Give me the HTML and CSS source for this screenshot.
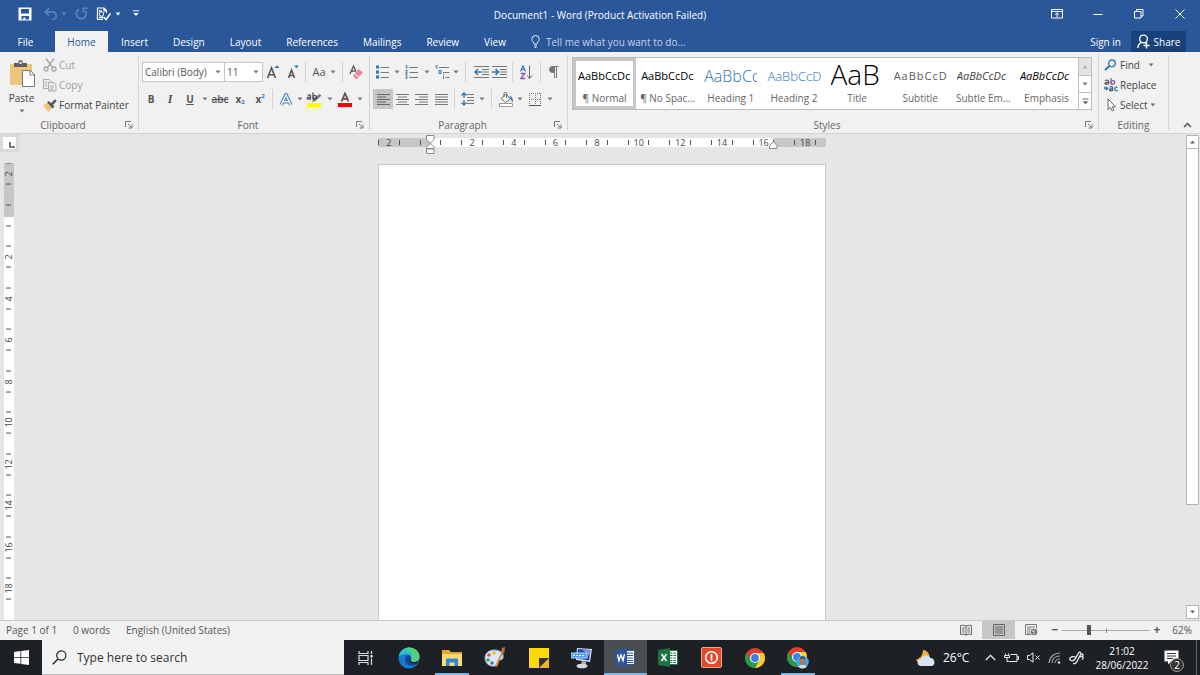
FILE: index.html
```html
<!DOCTYPE html>
<html lang="en">
<head>
<meta charset="utf-8">
<title>Document1 - Word</title>
<link rel="stylesheet" href="styles.css">
</head>
<body>
<svg class="defs" aria-hidden="true">
  <symbol id="caret" viewBox="0 0 6 4"><path d="M0.5 0.5h5L3 3.5z" fill="currentColor"/></symbol>
  <symbol id="launch" viewBox="0 0 8 8"><path d="M.5 6V.5H6M3 3l3.5 3.5M7 3.5V7H3.5" fill="none" stroke="#777"/></symbol>
</svg>

<header class="titlebar">
  <div class="qat">
    <button aria-label="Save"><svg width="14" height="14" viewBox="0 0 14 14"><path fill="#fff" fill-rule="evenodd" d="M.5.5h13v13H.5zM3 2v4.5h8V2zM3.500 9v3.500h1.800V10.500h2v2H11V9z"/></svg></button>
    <button class="dim" aria-label="Undo"><svg width="14" height="12" viewBox="0 0 14 12"><path d="M1 4h7.500a3.700 3.700 0 0 1 0 7.400M5 .5L1.200 4 5 7.500" fill="none" stroke="currentColor" stroke-width="1.600"/></svg></button>
    <button class="dim" aria-label="Undo options"><svg width="6" height="4"><use href="#caret"/></svg></button>
    <button class="dim" aria-label="Redo"><svg width="13" height="13" viewBox="0 0 13 13"><path d="M4.200 2.200A5 5 0 1 0 10.200 3.600M7.500 1.200h5M8.200 1.200v4.300" fill="none" stroke="currentColor" stroke-width="1.600"/></svg></button>
    <button aria-label="Spelling"><svg width="15" height="14" viewBox="0 0 15 14"><path d="M7 12.500H1.500V1H8l2.500 2.500V6M8 1v3h2.500" fill="none" stroke="#fff" stroke-width="1.200"/><circle cx="5.500" cy="7" r="2.200" fill="none" stroke="#fff"/><path d="M3 4h3M3 10.500h4M7.500 10l2.500 2.500 4.500-6" fill="none" stroke="#fff" stroke-width="1.500"/></svg></button>
    <button aria-label="Spelling options"><svg width="6" height="4"><use href="#caret"/></svg></button>
    <button aria-label="Customize toolbar"><svg width="6" height="7" viewBox="0 0 6 7"><path d="M0 .8h6" stroke="#fff"/><path d="M.3 3h5.400L3 6z" fill="#fff"/></svg></button>
  </div>
  <h1 class="doc-title">Document1 - Word (Product Activation Failed)</h1>
  <div class="window-controls">
    <button aria-label="Ribbon display options"><svg width="12" height="10" viewBox="0 0 12 10"><path d="M.5.5h11v8.500H.5zM.5 2.500h11M6 8V4M4 5.800L6 3.800l2 2" fill="none" stroke="#fff"/></svg></button>
    <button aria-label="Minimize"><svg width="10" height="10" viewBox="0 0 10 10"><path d="M.5 5.500h9" stroke="#fff"/></svg></button>
    <button aria-label="Restore"><svg width="10" height="10" viewBox="0 0 10 10"><path d="M.5 2.500h6.500v6.500H.5zM2.500 2.500v-2H9v6.500H7" fill="none" stroke="#fff"/></svg></button>
    <button aria-label="Close"><svg width="10" height="10" viewBox="0 0 10 10"><path d="M.5.5l9 9M9.500.5l-9 9" stroke="#fff"/></svg></button>
  </div>
</header>

<nav class="tabs">
  <button class="tab file">File</button>
  <button class="tab active">Home</button>
  <button class="tab">Insert</button>
  <button class="tab">Design</button>
  <button class="tab">Layout</button>
  <button class="tab">References</button>
  <button class="tab">Mailings</button>
  <button class="tab">Review</button>
  <button class="tab">View</button>
  <button class="tab tell"><svg width="9" height="13" viewBox="0 0 9 13"><path d="M3 9C3 7 .8 6.500.8 4.200a3.700 3.700 0 0 1 7.400 0C8.200 6.500 6 7 6 9zM3 10.800h3M3.500 12.500h2" fill="none" stroke="#e3ebf6"/></svg>Tell me what you want to do...</button>
  <button class="sign-in">Sign in</button>
  <button class="share"><svg width="13" height="15" viewBox="0 0 13 15"><circle cx="6.500" cy="5" r="3.900" fill="none" stroke="#fff" stroke-width="1.400"/><path d="M.8 14c.3-3 1.700-4.800 3.700-5.600M8 8.500l1.500 1.500M9.500 8.500v6M6.500 11.500h6" fill="none" stroke="#fff" stroke-width="1.400"/></svg>Share</button>
</nav>

<main class="ribbon">
  <section class="group clipboard">
    <div class="clip-body">
      <button class="paste"><svg width="26" height="27" viewBox="0 0 26 27"><path d="M1 4h22v21H1z" fill="#edc57d"/><path d="M5 3h4.500V.5h4V3H18v4H5z" fill="#606060"/><path d="M10.500 2h2v2h-2z" fill="#eee"/><path d="M13.500 10.500h8l4 4V26.500h-12z" fill="#fff" stroke="#777"/><path d="M21 10.500v4.500h4.500" fill="none" stroke="#777"/></svg><span>Paste</span><svg width="6" height="4"><use href="#caret"/></svg></button>
      <div class="clip-list">
        <button class="off"><svg width="14" height="14" viewBox="0 0 14 14"><g fill="none" stroke="#a5a5a5" stroke-width="1.300"><path d="M3 .5l6.500 9M11 .5l-6.500 9"/><circle cx="3" cy="11" r="2"/><circle cx="11" cy="11" r="2"/></g></svg>Cut</button>
        <button class="off"><svg width="14" height="14" viewBox="0 0 14 14"><g fill="#f0f0f0" stroke="#a9a9a9"><path d="M.5 1.500H6l2 2v7H.5z"/><path d="M5.500 4.500h5l2.500 2.500v6h-7.500z"/><path d="M2 4h2M2 6h2M2 8h2M7 8h4M7 10h4M7 12h3"/></g></svg>Copy</button>
        <button><svg width="14" height="13" viewBox="0 0 14 13"><path d="M0 6l4-2 5 5-3.500 4C3.500 11 2 9 0 6z" fill="#edc57d"/><path d="M4 3.500L6 2l2 2L12 .3l1.800 1.800L10 6l1.500 1.500L9.500 9.500z" fill="#5a5a5a"/></svg>Format Painter</button>
      </div>
    </div>
    <footer><span>Clipboard</span><button class="launcher" aria-label="Clipboard settings"><svg width="8" height="8"><use href="#launch"/></svg></button></footer>
  </section>

  <section class="group font">
    <div class="bar font-top">
      <button class="combo"><span>Calibri (Body)</span><svg width="6" height="4"><use href="#caret"/></svg></button>
      <button class="combo size"><span>11</span><svg width="6" height="4"><use href="#caret"/></svg></button>
      <button aria-label="Grow font"><svg width="14" height="14" viewBox="0 0 14 14"><path d="M1.500 13L5.500 3l4 10M3 9.800h5" fill="none" stroke="#555" stroke-width="1.600"/><path d="M8.500 3L11 .3 13.500 3z" fill="#2e75b6"/></svg></button>
      <button aria-label="Shrink font"><svg width="12" height="14" viewBox="0 0 12 14"><path d="M1.500 13L4.500 5l3 8M2.500 10.500h4" fill="none" stroke="#555" stroke-width="1.600"/><path d="M7 .5h5L9.500 3.200z" fill="#2e75b6"/></svg></button>
      <i class="sep"></i>
      <button class="case">Aa<svg width="6" height="4"><use href="#caret"/></svg></button>
      <i class="sep"></i>
      <button aria-label="Clear formatting"><svg width="14" height="15" viewBox="0 0 14 15"><path d="M1 9L4.500 1 7 6.500M2.500 6h4" fill="none" stroke="#555" stroke-width="1.300"/><path d="M4 10.500L9.500 4 14 7.500 8 14H6.500z" fill="#e8899b"/><path d="M5.500 8.800l4.300 3.500" stroke="#f3f3f3"/></svg></button>
    </div>
    <div class="bar font-bottom">
      <button class="b">B</button>
      <button class="i">I</button>
      <button class="u">U</button>
      <button aria-label="Underline options"><svg width="6" height="4"><use href="#caret"/></svg></button>
      <button class="strike">abc</button>
      <button class="script">x<sub>2</sub></button>
      <button class="script">x<sup>2</sup></button>
      <i class="sep"></i>
      <button aria-label="Text effects"><svg width="14" height="13" viewBox="0 0 14 13"><path d="M2.200 12L7 1.500 11.800 12M4 8.700h6" fill="none" stroke="#5b90cc" stroke-width="3.600"/><path d="M2.200 12L7 1.800 11.800 12M4 8.700h6" fill="none" stroke="#fff" stroke-width="1.200"/></svg></button>
      <button aria-label="Text effects options"><svg width="6" height="4"><use href="#caret"/></svg></button>
      <button aria-label="Highlight"><svg width="16" height="15" viewBox="0 0 16 15"><path d="M1 11h14v4H1z" fill="#ff0"/><path d="M6 10l1-3 6.500-5L15.500 3.500 9.500 9z" fill="#777"/><path d="M1.500 3.300q3-1.200 3 .8v3.400M4.500 5q-3.300 0-3.300 1.300t3.300.6M7 .5v7" fill="none" stroke="#444" stroke-width="1.200"/><circle cx="8.800" cy="5.200" r="1.700" fill="none" stroke="#444" stroke-width="1.200"/></svg></button>
      <button aria-label="Highlight options"><svg width="6" height="4"><use href="#caret"/></svg></button>
      <button aria-label="Font color"><svg width="14" height="15" viewBox="0 0 14 15"><path d="M0 11h14v4H0z" fill="#f00"/><path d="M3.500 9.500L7 1.500l3.500 8M4.800 6.800h4.400" fill="none" stroke="#555" stroke-width="1.800"/></svg></button>
      <button aria-label="Font color options"><svg width="6" height="4"><use href="#caret"/></svg></button>
    </div>
    <footer><span>Font</span><button class="launcher" aria-label="Font settings"><svg width="8" height="8"><use href="#launch"/></svg></button></footer>
  </section>

  <section class="group paragraph">
    <div class="bar para-top">
      <button aria-label="Bullets"><svg width="14" height="14" viewBox="0 0 14 14"><path d="M0 .5h3v3H0zM0 5.500h3v3H0zM0 10.500h3v3H0z" fill="#2e75b6"/><path d="M4.500 2.500H13M4.500 7.500H13M4.500 12.500H13" stroke="#777"/></svg></button>
      <button aria-label="Bullet options"><svg width="6" height="4"><use href="#caret"/></svg></button>
      <button aria-label="Numbering"><svg width="14" height="14" viewBox="0 0 14 14"><path d="M.5 1.200L1.800.5v3.500M.3 5.500h2L.8 8.300h2M.3 10h2L1.500 11.500 2.300 13H.2" fill="none" stroke="#2e75b6"/><path d="M4.500 2.500H13M4.500 7.500H13M4.500 12.500H13" stroke="#777"/></svg></button>
      <button aria-label="Numbering options"><svg width="6" height="4"><use href="#caret"/></svg></button>
      <button aria-label="Multilevel list"><svg width="15" height="14" viewBox="0 0 15 14"><path d="M.5 1.200L1.800.5v3.500M4 5.500h2v3H4zM8.500 11v3M8.500 9v1" fill="none" stroke="#2e75b6"/><path d="M4 2.500h10M8 7.500h6.500M10.500 12.500h4" stroke="#777"/></svg></button>
      <button aria-label="Multilevel options"><svg width="6" height="4"><use href="#caret"/></svg></button>
      <i class="sep"></i>
      <button aria-label="Decrease indent"><svg width="15" height="12" viewBox="0 0 15 12"><path d="M0 .5h15M8 3.500h7M8 6h7M8 8.500h7M0 11.500h15" stroke="#777"/><path d="M7.500 6H1.500M4 3L1 6l3 3" fill="none" stroke="#2e75b6" stroke-width="1.500"/></svg></button>
      <button aria-label="Increase indent"><svg width="15" height="12" viewBox="0 0 15 12"><path d="M0 .5h15M8 3.500h7M8 6h7M8 8.500h7M0 11.500h15" stroke="#777"/><path d="M0 6h6M3.500 3l3 3-3 3" fill="none" stroke="#2e75b6" stroke-width="1.500"/></svg></button>
      <i class="sep"></i>
      <button aria-label="Sort"><svg width="13" height="15" viewBox="0 0 13 15"><path d="M.5 6.500L3 .8l2.500 5.700M1.500 4.500h3" fill="none" stroke="#2e75b6" stroke-width="1.200"/><path d="M.8 8.500h4L.8 13.500h4.500" fill="none" stroke="#8e55b0" stroke-width="1.300"/><path d="M9.500.5v13M7 10.500l2.500 3 2.500-3" fill="none" stroke="#666"/></svg></button>
      <i class="sep"></i>
      <button aria-label="Show paragraph marks"><svg width="10" height="12" viewBox="0 0 10 12"><path d="M5 .5H3.500a3 3 0 0 0 0 6H5zM5 .5h4.500M5.500 0v12M7.500.5V12" fill="#777" stroke="#777"/></svg></button>
    </div>
    <div class="bar para-bottom">
      <button class="selected" aria-label="Align left"><svg width="13" height="11" viewBox="0 0 13 11"><path d="M0 .5h13M0 3h9M0 5.500h13M0 8h9M0 10.500h13" stroke="#666"/></svg></button>
      <button aria-label="Center"><svg width="13" height="11" viewBox="0 0 13 11"><path d="M0 .5h13M2 3h9M0 5.500h13M2 8h9M0 10.500h13" stroke="#777"/></svg></button>
      <button aria-label="Align right"><svg width="13" height="11" viewBox="0 0 13 11"><path d="M0 .5h13M4 3h9M0 5.500h13M4 8h9M0 10.500h13" stroke="#777"/></svg></button>
      <button aria-label="Justify"><svg width="13" height="11" viewBox="0 0 13 11"><path d="M0 .5h13M0 3h13M0 5.500h13M0 8h13M0 10.500h13" stroke="#777"/></svg></button>
      <i class="sep"></i>
      <button aria-label="Line spacing"><svg width="14" height="14" viewBox="0 0 14 14"><path d="M3 1v5M3 8v5M.5 3.500L3 1l2.500 2.500M.5 10.500L3 13l2.500-2.500" fill="none" stroke="#2e75b6" stroke-width="1.300"/><path d="M6 2.500h7M6 5.500h7M6 8.500h7M6 11.500h7" stroke="#777"/></svg></button>
      <button aria-label="Spacing options"><svg width="6" height="4"><use href="#caret"/></svg></button>
      <i class="sep"></i>
      <button aria-label="Shading"><svg width="15" height="15" viewBox="0 0 15 15"><path d="M2 6.500L7 2l4.500 5-5 3.500zM5 5V1.500a1.300 1.300 0 0 1 2.600 0V6" fill="#fff" stroke="#666"/><path d="M10.500 4c3 .5 3.500 3 3.500 6-1.500-.5-2-2.500-2.500-4z" fill="#2e75b6"/><path d="M.5 11.500h13v3H.5z" fill="#fff" stroke="#999"/></svg></button>
      <button aria-label="Shading options"><svg width="6" height="4"><use href="#caret"/></svg></button>
      <button aria-label="Borders"><svg width="13" height="13" viewBox="0 0 13 13"><path d="M0 .5h12M0 6.500h12M.5 0v12M6.500 0v12M11.500 0v12" fill="none" stroke="#777" stroke-dasharray="1 1"/><path d="M0 12.500h12" stroke="#555"/></svg></button>
      <button aria-label="Border options"><svg width="6" height="4"><use href="#caret"/></svg></button>
    </div>
    <footer><span>Paragraph</span><button class="launcher" aria-label="Paragraph settings"><svg width="8" height="8"><use href="#launch"/></svg></button></footer>
  </section>

  <section class="group styles">
    <div class="gallery">
      <button class="style chosen"><span class="sample">AaBbCcDc</span><span>¶ Normal</span></button>
      <button class="style"><span class="sample">AaBbCcDc</span><span>¶ No Spac...</span></button>
      <button class="style"><span class="sample h1">AaBbCc</span><span>Heading 1</span></button>
      <button class="style"><span class="sample h2">AaBbCcD</span><span>Heading 2</span></button>
      <button class="style"><span class="sample title">AaB</span><span>Title</span></button>
      <button class="style"><span class="sample subtitle">AaBbCcD</span><span>Subtitle</span></button>
      <button class="style"><span class="sample subtle">AaBbCcDc</span><span>Subtle Em...</span></button>
      <button class="style"><span class="sample emph">AaBbCcDc</span><span>Emphasis</span></button>
      <div class="gallery-nav">
        <button class="nav-off" aria-label="Previous styles"><svg width="6" height="4" viewBox="0 0 6 4"><path d="M.5 3.500h5L3 .5z" fill="#aaa"/></svg></button>
        <button aria-label="Next styles"><svg width="6" height="4"><use href="#caret"/></svg></button>
        <button aria-label="More styles"><svg width="7" height="7" viewBox="0 0 7 7"><path d="M.5 1h6" stroke="#666"/><path d="M.8 3.300h5.400L3.500 6.500z" fill="#666"/></svg></button>
      </div>
    </div>
    <footer><span>Styles</span><button class="launcher" aria-label="Style settings"><svg width="8" height="8"><use href="#launch"/></svg></button></footer>
  </section>

  <section class="group editing">
    <div class="edit-list">
      <button><svg width="14" height="12" viewBox="0 0 14 12"><circle cx="8" cy="4.300" r="3.300" fill="#fff" stroke="#2e75b6" stroke-width="1.400"/><path d="M5.500 7L1 11" stroke="#2e75b6" stroke-width="2"/></svg><span class="find">Find</span><svg width="6" height="4"><use href="#caret"/></svg></button>
      <button><svg width="14" height="14" viewBox="0 0 14 14"><g fill="none" stroke-width="1.300"><path d="M1 2.500q3.500-1 3.500 1v3M4.500 4.200q-3.500 0-3.500 1.200t3.500.5" stroke="#555"/><path d="M7 0v6.500" stroke="#8e55b0"/><circle cx="9" cy="4.500" r="1.800" stroke="#8e55b0"/><path d="M5.500 9q3-1 3 .8v3.200M8.500 10.700q-3 0-3 1.200t3 .4" stroke="#555"/><path d="M13.500 9.500a1.700 1.700 0 1 0 0 2.800M.8 8.500v2H3.500M2.200 9l1.500 1.500L2.200 12" stroke="#2e75b6"/></g></svg><span>Replace</span></button>
      <button><svg width="14" height="14" viewBox="0 0 14 14"><path d="M4 1v10.500l2.500-2.200L8.300 13l1.500-.8L8.300 8.800h3.200z" fill="#fff" stroke="#666"/></svg><span>Select</span><svg width="6" height="4"><use href="#caret"/></svg></button>
    </div>
    <footer class="plain"><span>Editing</span></footer>
  </section>
  <button class="collapse" aria-label="Collapse ribbon"><svg width="9" height="6" viewBox="0 0 9 6"><path d="M1 5l3.500-3.500L8 5" fill="none" stroke="#555" stroke-width="1.500"/></svg></button>
</main>

<div class="workspace">
  <div class="left-rail">
    <button class="tab-stop" aria-label="Tab stop"><svg width="6" height="6" viewBox="0 0 6 6"><path d="M1 0v5h5" fill="none" stroke="#555" stroke-width="1.600"/></svg></button>
    <div class="v-ruler">
      <div class="v-cells">
        <span>2</span><span></span><span>2</span><span>4</span><span>6</span><span>8</span><span>10</span><span>12</span><span>14</span><span>16</span><span>18</span>
      </div>
    </div>
  </div>
  <div class="canvas">
    <div class="h-ruler">
      <div class="h-cells">
        <span>2</span><span></span><span>2</span><span>4</span><span>6</span><span>8</span><span>10</span><span>12</span><span>14</span><span>16</span><span>18</span>
      </div>
      <svg class="indent-left" width="9" height="20" viewBox="0 0 9 20"><path d="M.5.5h7.500v4l-3.700 4-3.800-4zM.5 13.500v-1.500l3.800-3.500 3.700 3.500v1.500zM.5 14h7.500v4.500H.5z" fill="#fff" stroke="#888"/></svg>
      <svg class="indent-right" width="9" height="8" viewBox="0 0 9 8"><path d="M.5 7.500v-3l3.800-3.800 3.700 3.800v3z" fill="#fff" stroke="#888"/></svg>
    </div>
    <article class="page" contenteditable="true" aria-label="Document page"></article>
  </div>
  <div class="scrollbar">
    <button aria-label="Scroll up"><svg width="7" height="4" viewBox="0 0 6 4"><path d="M.5 3.500h5L3 .5z" fill="#666"/></svg></button>
    <div class="track"><div class="thumb"></div></div>
    <button aria-label="Scroll down"><svg width="7" height="4" viewBox="0 0 6 4"><path d="M.5.5h5L3 3.500z" fill="#666"/></svg></button>
  </div>
</div>

<div class="status">
  <span class="s-page">Page 1 of 1</span><span class="s-words">0 words</span><span>English (United States)</span>
  <div class="views">
    <button aria-label="Read mode"><svg width="12" height="12" viewBox="0 0 12 12"><path d="M.5 1.500q3-.8 5.500.5 2.500-1.300 5.500-.5v9q-3-.8-5.500.5-2.500-1.300-5.500-.5zM6 2v9M2 4h2.500M2 6h2.500M2 8h2.500M7.500 4H10M7.500 6H10M7.500 8H10" fill="none" stroke="#666"/></svg></button>
    <button class="selected" aria-label="Print layout"><svg width="12" height="12" viewBox="0 0 12 12"><path d="M.5.5h11v11H.5zM2 3h8M2 5h8M2 7h8M2 9h8" fill="none" stroke="#666"/></svg></button>
    <button aria-label="Web layout"><svg width="13" height="12" viewBox="0 0 13 12"><path d="M6 10.500H.5V.5h11v4M2 3h8M2 5h4M2 7h3M2 9h3" fill="none" stroke="#777"/><circle cx="9" cy="8" r="3.300" fill="#777"/><path d="M7 7l2 .5 1-1.500M8 10l2-1" fill="none" stroke="#fff" stroke-width=".8"/></svg></button>
  </div>
  <div class="zoom">
    <button aria-label="Zoom out">−</button>
    <input type="range" min="0" max="100" value="30" aria-label="Zoom">
    <button aria-label="Zoom in">+</button>
    <span class="pct">62%</span>
  </div>
</div>

<div class="taskbar">
  <button class="start" aria-label="Start"><svg width="15" height="15" viewBox="0 0 15 15"><path d="M0 2l6.500-1v6H0zM7.300.9L15 0v7H7.300zM0 7.800h6.500v6L0 13zM7.300 7.800H15V15l-7.700-1z" fill="#fff"/></svg></button>
  <label class="search"><svg width="15" height="15" viewBox="0 0 15 15"><circle cx="9.300" cy="5.500" r="4.600" fill="none" stroke="#222" stroke-width="1.200"/><path d="M6 9L.7 14.300" stroke="#222" stroke-width="1.300"/></svg><input type="text" placeholder="Type here to search" aria-label="Type here to search"></label>
  <div class="apps">
    <button aria-label="Task view"><svg width="16" height="14" viewBox="0 0 16 14"><path d="M1 0v2.500h9V0M1 14v-2.500h9V14M1 4.500h9v5H1zM13.500 0v3M13.500 7.500V14" fill="none" stroke="#ddd" stroke-width="1.200"/><path d="M12.500 4h2v2.500h-2z" fill="#fff"/></svg></button>
    <button aria-label="Edge"><svg width="22" height="22" viewBox="0 0 22 22"><circle cx="11" cy="11" r="10.500" fill="#167bd0"/><path d="M.7 10C1.500 4 6 .5 11 .5c6 0 10.500 4.500 10.500 9 0 4-3 5.500-6.500 5.500-2 0-3-1-2-2.500C14 10 12.500 7 9 7c-4 0-7 1-8.300 3z" fill="#36c2c0"/><path d="M11 .5c6 0 10.500 4.500 10.500 9 0 4-3 5.500-6.500 5.500-2 0-3-1-2-2.500C16 10 14 4 7 1.300z" fill="#55d07a"/><path d="M7 13c-.8-4 3-6 6-3-1 2-1 5 3 5.500 2 0 3.500-.5 4.500-1.500-2 5-7 5.500-9 4.500C9 18 7.500 16 7 13z" fill="#0d4a9c"/><path d="M12.800 11.200c-.8 1.700-.5 3.400 2 3.900 2 .3 4-.2 5.700-1.500-.5 1.500-1 2-1.500 2.700-3 .8-8-.3-7.700-3.300 0-1 .8-1.800 1.500-1.800z" fill="#172027"/></svg></button>
    <button class="running" aria-label="File Explorer"><svg width="20" height="17" viewBox="0 0 20 17"><path d="M0 1h7l2 2h11v14H0z" fill="#e5a72f"/><path d="M0 5h20v12H0z" fill="#ffda72"/><path d="M4 17V9.500h12V17h-3.500v-3.500h-5V17z" fill="#2e8bdc"/></svg></button>
    <button aria-label="Paint"><svg width="22" height="21" viewBox="0 0 22 21"><path d="M10 3c6 0 10 3 9 8-1 3-4 1-5 3s1 4-3 5c-6 1-10-3-10-8s4-8 9-8z" fill="#d9e9f5" stroke="#91b4cf"/><circle cx="5" cy="8" r="1.800" fill="#e94b36"/><circle cx="10" cy="6" r="1.800" fill="#f3bb22"/><circle cx="4" cy="13" r="1.800" fill="#45a649"/><circle cx="8" cy="16" r="1.800" fill="#377cc7"/><path d="M11 19L18 4l1.500.8L13 20z" fill="#e08a38"/><path d="M17 5l1-4 3-1-.5 5-1.500 1.500z" fill="#b5713c"/></svg></button>
    <button aria-label="Sticky Notes"><svg width="20" height="20" viewBox="0 0 20 20"><path d="M0 0h20v20H0z" fill="#ffd80b"/><path d="M10 10h10v10H10z" fill="#343434"/><path d="M20 10L10 20h10z" fill="#f2b31c"/></svg></button>
    <button aria-label="Remote desktop"><svg width="22" height="22" viewBox="0 0 22 22"><path d="M6 1l15 1-2 13-14-2z" fill="#dce0eb"/><path d="M7 2l12.500 1-1.500 10.500L6 11.500z" fill="#263fc0"/><path d="M11 2.500l8.500.5-1 6z" fill="#7e91e6"/><path d="M0 6h16v5H0z" fill="#4da1e5" stroke="#b9ddfa"/><path d="M2 8.500h12" stroke="#dff" stroke-dasharray="2 1"/><path d="M11 14l4 .5v3h-5z" fill="#aaa"/><ellipse cx="11" cy="19" rx="5.500" ry="2.300" fill="#dadada"/></svg></button>
    <button class="running current" aria-label="Word"><svg width="20" height="19" viewBox="0 0 20 19"><path d="M9 2.500h10.500v14H9z" fill="#fff" stroke="#2b579a"/><path d="M12 5h6M12 7.500h6M12 10h6M12 12.500h6M12 14.500h6" stroke="#2b579a"/><path d="M0 2l12-2v19L0 17z" fill="#2b579a"/><path d="M2.500 6.500l1.500 6L6 7l2 5.500 1.500-6.300" fill="none" stroke="#fff" stroke-width="1.400"/></svg></button>
    <button aria-label="Excel"><svg width="20" height="19" viewBox="0 0 20 19"><path d="M9 2.500h10.500v14H9z" fill="#fff" stroke="#207245"/><path d="M12 5h2.500M12 7.500h2.500M12 10h2.500M12 12.500h2.500M12 14.500h2.500M15.500 5H18M15.500 7.500H18M15.500 10H18M15.500 12.500H18M15.500 14.500H18" stroke="#207245"/><path d="M0 2l12-2v19L0 17z" fill="#207245"/><path d="M3.500 6l5 7M8.500 6l-5 7" fill="none" stroke="#fff" stroke-width="1.600"/></svg></button>
    <button aria-label="Power tool"><svg width="21" height="21" viewBox="0 0 21 21"><rect x=".5" y=".5" width="20" height="20" rx="1.500" fill="#e04a2c" stroke="#f3a492"/><circle cx="10.500" cy="10.500" r="5.800" fill="none" stroke="#fff" stroke-width="1.500"/><path d="M10.500 7v7" stroke="#fff" stroke-width="1.700"/></svg></button>
    <button aria-label="Chrome"><svg width="20" height="20" viewBox="0 0 20 20"><circle cx="10" cy="10" r="10" fill="#e33b2e"/><path d="M1.340 5A10 10 0 0 0 10 20l4.300-7.500H5.700z" fill="#269b4a"/><path d="M10 20a10 10 0 0 0 8.660-15H10l4.300 7.500z" fill="#fdcb2e"/><circle cx="10" cy="10" r="5" fill="#fff"/><circle cx="10" cy="10" r="3.900" fill="#3d7ee8"/></svg></button>
    <button class="running" aria-label="Chrome profile"><svg width="22" height="22" viewBox="0 0 22 22"><circle cx="10" cy="10" r="10" fill="#e33b2e"/><path d="M1.340 5A10 10 0 0 0 10 20l4.300-7.500H5.700z" fill="#269b4a"/><path d="M10 20a10 10 0 0 0 8.660-15H10l4.300 7.500z" fill="#fdcb2e"/><circle cx="10" cy="10" r="5" fill="#fff"/><circle cx="10" cy="10" r="3.900" fill="#3d7ee8"/><circle cx="15.500" cy="15" r="6.300" fill="#4aa4dc"/><path d="M11.500 20c1-3 7-3 8 0a6 6 0 0 1-8 0z" fill="#ddd"/><ellipse cx="15.500" cy="14" rx="2.800" ry="3.800" fill="#a97661"/><path d="M12.700 13c0-5 5.600-5 5.600 0-1-2-4.600-2-5.600 0z" fill="#4d4544"/></svg></button>
  </div>
  <div class="tray">
    <svg width="20" height="18" viewBox="0 0 20 18"><path d="M7 1a7 7 0 1 1-7 9.500C4 10 7 6 7 1z" fill="#fbb034"/><path d="M5 17a3.500 3.500 0 0 1 .3-7A5 5 0 0 1 14.500 9 4.200 4.200 0 0 1 16 17z" fill="#d5e4f8"/></svg>
    <span class="temp">26°C</span>
    <div class="tray-icons">
      <svg width="11" height="7" viewBox="0 0 11 7"><path d="M.8 6l4.700-4.700L10.200 6" fill="none" stroke="#eee" stroke-width="1.300"/></svg>
      <svg width="15" height="10" viewBox="0 0 15 10"><path d="M6.500 1.500H13v7H4.500M13 3.500h1.500v3H13M1.500.5v2M4.500.5v2M.5 2.500h5v2h-5zM3 4.500v4h1.500" fill="none" stroke="#eee"/></svg>
      <svg width="13" height="11" viewBox="0 0 13 11"><path d="M.5 3.500h2L6 .8v9.400L2.500 7.500h-2zM8.500 3.500l4 4M12.500 3.500l-4 4" fill="none" stroke="#eee"/></svg>
      <svg width="13" height="12" viewBox="0 0 13 12"><path d="M1 11C1.500 5 6 1 12 1M4 11c.3-4 3-7 8-7M7 11c.3-2 2-4 5-4" fill="none" stroke="#999" stroke-width="1.200"/><circle cx="11" cy="10.500" r="1.300" fill="#ddd"/></svg>
      <svg width="15" height="14" viewBox="0 0 15 14"><path d="M6.500 6C2 4.500-1 8 2 9.500c2 1 4-1 5-3L9.500 2c1-1.700 3-.7 2.300 1L8 10.500c-1 2-3 3-3.500 1.500M10.500 6c3-1.500 5 0 2.500 2.500M12 3.500c1.500-1 2.500 0 1.500 1.500" fill="none" stroke="#eee" stroke-width="1.300"/></svg>
    </div>
    <div class="clock"><span>21:02</span><span>28/06/2022</span></div>
    <button class="notify" aria-label="Notifications"><svg width="15" height="15" viewBox="0 0 15 15"><path d="M.5.5h14v11H7L4 14.500v-3H.5z" fill="#fff"/><path d="M3 3.500h9M3 6h9M3 8.500h6" stroke="#333"/></svg><span class="badge">2</span></button>
    <i class="desk"></i>
  </div>
</div>
</body>
</html>
```
FILE: styles.css
```css
* { box-sizing: border-box; }

body {
  margin: 0;
  height: 100vh;
  display: flex;
  flex-direction: column;
  overflow: hidden;
  background: #e6e6e6;
  color: #444;
  font: 10px/14px "Open Sans", "Noto Sans", sans-serif;
}

button {
  display: flex;
  align-items: center;
  justify-content: center;
  margin: 0;
  padding: 0;
  border: 0;
  background: none;
  color: inherit;
  font: inherit;
  white-space: nowrap;
}

svg { display: block; flex: none; }
.defs { position: absolute; width: 0; height: 0; }

/* Title bar */
.titlebar {
  flex: none;
  display: grid;
  grid-template-columns: 1fr auto 1fr;
  height: 31px;
  background: #2a579a;
  color: #fff;
}
.qat {
  display: grid;
  grid-template-columns: 32px 20px 6px 28px 16px 14px 22px;
  height: 27px;
  padding-left: 9px;
}
.dim { color: #6186bd; }
.doc-title { margin: 0; font-size: 10px; font-weight: 400; line-height: 31px; }
.window-controls {
  display: grid;
  grid-template-columns: repeat(4, 41px);
  justify-content: end;
  height: 27px;
}

/* Tabs */
.tabs {
  flex: none;
  display: flex;
  gap: 1px;
  height: 21px;
  background: #2a579a;
  color: #fff;
}
.tab { padding: 0 12px; }
.file { width: 54px; padding: 0 3px 0 0; }
.active { width: 53px; background: #f1f1f1; color: #2a579a; }
.tell { gap: 6px; color: #c5d3e8; }
.sign-in { margin-left: auto; padding: 0 9px; }
.share { gap: 4px; width: 55px; margin-right: 14px; background: #19417c; }

/* Ribbon */
.ribbon {
  flex: none;
  display: flex;
  height: 82px;
  padding: 3px 0;
  background: #f1f1f1;
  border-bottom: 1px solid #d2d2d2;
}
.group {
  display: flex;
  flex-direction: column;
  flex: none;
  padding: 0 3px;
  border-right: 1px solid #d4d4d4;
}
.group footer {
  display: grid;
  grid-template-columns: 1fr 12px;
  align-items: center;
  justify-items: center;
  margin-top: auto;
  height: 10px;
  line-height: 10px;
  color: #666;
}
.group .plain { grid-template-columns: 1fr; }
.clipboard { width: 139px; }
.font { width: 231px; }
.paragraph { width: 198px; }
.styles { flex: 1; min-width: 0; }
.editing { width: 70px; }
.bar use, .paste use, .edit-list use, .gallery use { color: #777; }

.clip-body { display: flex; }
.paste { flex-direction: column; gap: 4px; width: 37px; height: 60px; padding-top: 2px; }
.clip-list { display: grid; grid-template-rows: repeat(3, 20px); padding-left: 3px; }
.clip-list button { justify-content: flex-start; gap: 2px; }
.off { color: #a0a0a0; }

.bar { display: grid; height: 20px; margin-top: 7px; color: #555; }
.font-top { grid-template-columns: 83px 38px 20px 20px 5px 32px 5px 22px; }
.font-bottom { grid-template-columns: 18px 20px 20px 10px 20px 20px 20px 5px 22px 6px 22px 10px 20px 10px; }
.para-top { grid-template-columns: 20px 8px 22px 8px 22px 6px 13px 18px 18px 8px 20px 8px 19px; }
.para-bottom { grid-template-columns: 20px 19px 19px 20px 6px 22px 6px 12px 18px 9px 22px 8px; }
.sep { width: 1px; height: 20px; margin: 0 auto; background: #d4d4d4; }
.combo {
  justify-content: space-between;
  padding: 0 3px 0 2px;
  background: #fff;
  border: 1px solid #c6c6c6;
}
.size { border-left-width: 0; }
.case { gap: 4px; font-size: 11px; }
.b { font-weight: 700; }
.i { font: italic 700 12px "Liberation Serif", serif; }
.u { font-weight: 700; text-decoration: underline; }
.strike { font-weight: 600; text-decoration: line-through; }
.script { font-weight: 700; }
.script sub, .script sup { align-self: flex-end; font-size: 6px; line-height: 8px; color: #2e75b6; padding-bottom: 3px; }
.script sup { align-self: flex-start; padding: 3px 0 0; }
.selected { background: #c6c6c6; }

.gallery {
  display: flex;
  height: 53px;
  margin: 2px 3px 0 1px;
  background: #fff;
  border: 1px solid #bcbcbc;
}
.style {
  flex: 1;
  min-width: 0;
  flex-direction: column;
  justify-content: flex-end;
  padding: 0 3px 2px;
  border: 2px solid transparent;
  color: #666;
}
.chosen { border: 3px solid #c6c6c6; padding: 0 2px 1px; }
.sample {
  display: flex;
  align-items: center;
  align-self: stretch;
  height: 34px;
  overflow: hidden;
  color: #000;
  font-size: 11px;
}
.h1 { color: #2e75b6; font-size: 16px; font-weight: 300; }
.h2 { color: #2e75b6; font-size: 13px; font-weight: 300; }
.title { font-size: 28px; font-weight: 300; line-height: 28px; align-items: flex-start; }
.subtitle { color: #5a5a5a; letter-spacing: 1px; }
.subtle { color: #404040; font-style: italic; }
.emph { font-style: italic; }
.gallery-nav { display: grid; grid-template-rows: repeat(3, 1fr); width: 13px; border-left: 1px solid #bcbcbc; }
.gallery-nav button + button { border-top: 1px solid #bcbcbc; }
.nav-off { background: #e3e3e3; }

.edit-list { display: grid; grid-template-rows: repeat(3, 20px); padding-left: 2px; }
.edit-list button { justify-content: flex-start; gap: 2px; }
.find { width: 26px; text-align: left; }
.collapse { flex: none; align-self: flex-end; width: 31px; height: 10px; padding-left: 5px; }

/* Work area */
.workspace { flex: 1; min-height: 0; display: grid; grid-template-columns: 19px minmax(0, 1fr) 15px; }
.left-rail { display: flex; flex-direction: column; min-height: 0; }
.tab-stop {
  width: 19px;
  height: 18px;
  margin-bottom: 11px;
  padding: 3px 0 0 4px;
  background: #fff;
  border: 3px solid #dadada;
}
.v-ruler {
  flex: 1;
  min-height: 0;
  width: 10px;
  margin-left: 4px;
  overflow: hidden;
  background: linear-gradient(#c6c6c6 54px, #fff 54px);
}
.v-cells { display: flex; flex-direction: column; height: 100%; margin-top: -10px; }
.v-cells span {
  flex: 1;
  display: flex;
  align-items: center;
  justify-content: center;
  writing-mode: vertical-rl;
  transform: rotate(180deg);
  font-size: 9px;
  line-height: 10px;
}
.v-cells span::before, .v-cells span::after { content: ""; width: 5px; height: 1px; background: #555; }
.v-cells span::before { margin-bottom: auto; margin-top: 10px; }
.v-cells span::after { margin-top: auto; margin-bottom: 10px; }

.canvas { display: flex; flex-direction: column; align-items: center; min-height: 0; }
.h-ruler {
  position: relative;
  flex: none;
  width: 448px;
  height: 9px;
  margin: 4px 0 17px;
  background: linear-gradient(90deg, #c6c6c6 53px, #fff 53px 395px, #c6c6c6 395px);
}
.h-cells { display: flex; height: 9px; margin-left: -10px; clip-path: inset(0 0 0 10px); }
.h-cells span {
  flex: 1;
  display: flex;
  align-items: center;
  justify-content: space-between;
  padding: 0 10px;
  font-size: 9px;
  line-height: 9px;
}
.h-cells span::before, .h-cells span::after { content: ""; width: 1px; height: 5px; background: #555; }
.indent-left { position: absolute; left: 48px; top: -3px; }
.indent-right { position: absolute; right: 48px; top: 3px; }
.page { flex: 1; width: 448px; background: #fff; border: 1px solid #c9c9c9; border-bottom: 0; outline: 0; }

.scrollbar { display: flex; flex-direction: column; padding: 1px; }
.scrollbar button { height: 14px; background: #fff; border: 1px solid #b5b5b5; }
.track { flex: 1; display: flex; }
.thumb { flex: 1; height: 78%; background: #fff; border: 1px solid #b5b5b5; border-top: 0; }

/* Status bar */
.status {
  flex: none;
  display: flex;
  align-items: center;
  height: 20px;
  padding: 0 8px 1px 6px;
  background: #f1f1f1;
  border-top: 1px solid #c9c9c9;
  color: #555;
}
.s-page { width: 67px; }
.s-words { width: 53px; }
.views { display: flex; align-self: stretch; margin-left: auto; }
.views button { width: 33px; }
.zoom { display: flex; align-items: center; width: 144px; }
.zoom button { width: 14px; font-size: 12px; font-weight: 700; }
.zoom input {
  appearance: none;
  width: 88px;
  height: 12px;
  margin: 0;
  background: linear-gradient(#999, #999) center / 1px 5px no-repeat, linear-gradient(#aaa, #aaa) center / 100% 1px no-repeat;
}
.zoom input::-webkit-slider-thumb { appearance: none; width: 4px; height: 10px; background: #555; }
.pct { margin-left: auto; }

/* Taskbar */
.taskbar { flex: none; display: flex; height: 35px; background: #1d2125; color: #fff; }
.start { width: 42px; }
.search {
  display: flex;
  align-items: center;
  gap: 10px;
  width: 302px;
  padding-left: 10px;
  background: #f2f2f2;
  border-bottom: 1px solid #bbb;
}
.search input { flex: 1; min-width: 0; padding: 2px 0 0; border: 0; outline: 0; background: none; font: inherit; font-size: 12px; }
.search input::placeholder { color: #333; opacity: 1; }
.apps { display: flex; width: 476px; }
.apps button { flex: 1; }
.apps .running { background: linear-gradient(#76b9ed, #76b9ed) bottom / 34px 2px no-repeat; }
.apps .current { background: linear-gradient(#76b9ed, #76b9ed) bottom / 100% 2px no-repeat #4b4e51; }
.tray { display: flex; align-items: center; margin-left: auto; }
.temp { width: 49px; padding-left: 7px; font-size: 12px; }
.tray-icons { display: grid; grid-template-columns: 11px 15px 13px 13px 15px; gap: 8px; align-items: center; width: 109px; }
.clock { display: flex; flex-direction: column; align-items: center; width: 56px; }
.notify { position: relative; width: 46px; height: 30px; padding-right: 4px; }
.badge {
  position: absolute;
  right: 12px;
  bottom: 1px;
  width: 14px;
  height: 14px;
  border: 1px solid #999;
  border-radius: 7px;
  background: #333;
  line-height: 12px;
}
.desk { width: 4px; height: 35px; border-left: 1px solid #666; }
```
